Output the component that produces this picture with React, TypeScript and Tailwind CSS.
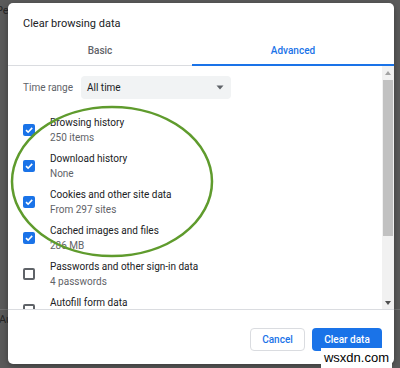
import React from "react";

function Check({ checked }: { checked: boolean }) {
  if (checked) {
    return (
      <div className="w-[12px] h-[12px] rounded-[2px] bg-[#1a73e8] flex items-center justify-center shrink-0">
        <svg width="10" height="10" viewBox="0 0 10 10">
          <path d="M2 5.2 L4.1 7.2 L8.2 2.9" fill="none" stroke="#fff" strokeWidth="1.6" />
        </svg>
      </div>
    );
  }
  return <div className="w-[12px] h-[12px] rounded-[2px] border-2 border-[#5f6368] shrink-0" />;
}

const rows: { title: string; sub: string; checked: boolean }[] = [
  { title: "Browsing history", sub: "250 items", checked: true },
  { title: "Download history", sub: "None", checked: true },
  { title: "Cookies and other site data", sub: "From 297 sites", checked: true },
  { title: "Cached images and files", sub: "286 MB", checked: true },
  { title: "Passwords and other sign-in data", sub: "4 passwords", checked: false },
  { title: "Autofill form data", sub: "", checked: false },
];

export default function App() {
  return (
    <div className="relative w-[400px] h-[368px] overflow-hidden bg-[#5a5a5a] font-['Roboto',sans-serif]">
      {/* underlying page */}
      <div className="flex flex-col text-[#262626]">
        <div className="pt-[4px] ml-[-4px] text-[11px] leading-[14px]">Pe</div>
        <div className="mt-[291px] h-[1px] bg-[#707070]" />
        <div className="mt-[3px] ml-[-1px] text-[11px] leading-[14px]">Au</div>
      </div>

      {/* dialog */}
      <div className="absolute left-[8px] top-[3px] w-[386px] h-[361px] bg-white rounded-[5px] shadow-[0_2px_6px_rgba(0,0,0,0.35)] flex flex-col overflow-hidden">
        <div className="pt-[14px] pb-[5px] pl-[15px] text-[11px] leading-[14px] text-[#202124]">
          Clear browsing data
        </div>
        <div className="flex h-[30px] border-b border-[#dadce0]">
          <div className="w-[184px] flex items-center justify-center text-[10px] font-medium text-[#5f6368]">
            Basic
          </div>
          <div className="flex-1 h-[30px] border-b-2 border-[#1a73e8] flex items-center justify-center text-[10px] font-medium text-[#1a73e8]">
            Advanced
          </div>
        </div>

        <div className="flex h-[243px] overflow-hidden">
          <div className="flex-1 flex flex-col pt-[10px] pl-[15px]">
            <div className="flex items-center h-[23px]">
              <div className="w-[58px] text-[10px] text-[#5f6368]">Time range</div>
              <div className="w-[150px] h-[23px] rounded-[4px] bg-[#f1f3f4] flex items-center justify-between pl-[6px] pr-[7px]">
                <span className="text-[10px] text-[#202124]">All time</span>
                <svg width="8" height="5" viewBox="0 0 8 5">
                  <path d="M0.5 0.5 L7.5 0.5 L4 4.5 Z" fill="#5f6368" />
                </svg>
              </div>
            </div>
            <div className="mt-[13px] flex flex-col">
              {rows.map((r) => (
                <div key={r.title} className="flex items-center h-[36px] shrink-0">
                  <Check checked={r.checked} />
                  <div className="ml-[15px] flex flex-col">
                    <div className="text-[10px] leading-[15px] text-[#202124]">{r.title}</div>
                    <div className="text-[10px] leading-[15px] text-[#5f6368]">{r.sub || "\u00a0"}</div>
                  </div>
                </div>
              ))}
            </div>
          </div>
          {/* scrollbar */}
          <div className="w-[12px] bg-[#f1f1f1] flex flex-col">
            <div className="h-[13px] flex items-center justify-center">
              <svg width="6" height="4" viewBox="0 0 6 4">
                <path d="M0 4 L6 4 L3 0 Z" fill="#a3a3a3" />
              </svg>
            </div>
            <div className="flex-1 flex flex-col px-[1px]">
              <div className="mt-[1px] h-[156px] bg-[#c1c1c1]" />
            </div>
            <div className="h-[13px] flex items-center justify-center">
              <svg width="6" height="4" viewBox="0 0 6 4">
                <path d="M0 0 L6 0 L3 4 Z" fill="#505050" />
              </svg>
            </div>
          </div>
        </div>

        <div className="flex-1 border-t border-[#dadce0] flex justify-end items-start gap-[7px] pt-[18px] pr-[12px]">
          <div className="w-[55px] h-[23px] rounded-[4px] border border-[#dadce0] flex items-center justify-center text-[10px] font-medium text-[#1a73e8]">
            Cancel
          </div>
          <div className="w-[70px] h-[23px] rounded-[4px] bg-[#1a73e8] flex items-center justify-center text-[10px] font-medium text-white">
            Clear data
          </div>
        </div>
      </div>

      {/* green annotation ellipse */}
      <svg className="absolute left-0 top-0" width="400" height="368" viewBox="0 0 400 368">
        <ellipse cx="112" cy="181.5" rx="100" ry="74.5" fill="none" stroke="#5f9b2d" strokeWidth="2.5" />
      </svg>

      {/* watermark */}
      <div className="absolute left-[321px] top-[348px] w-[71px] h-[20px] bg-white flex items-center justify-center font-['Liberation_Sans',sans-serif] text-[13px] leading-[20px] text-black">
        wsxdn.com
      </div>
    </div>
  );
}
